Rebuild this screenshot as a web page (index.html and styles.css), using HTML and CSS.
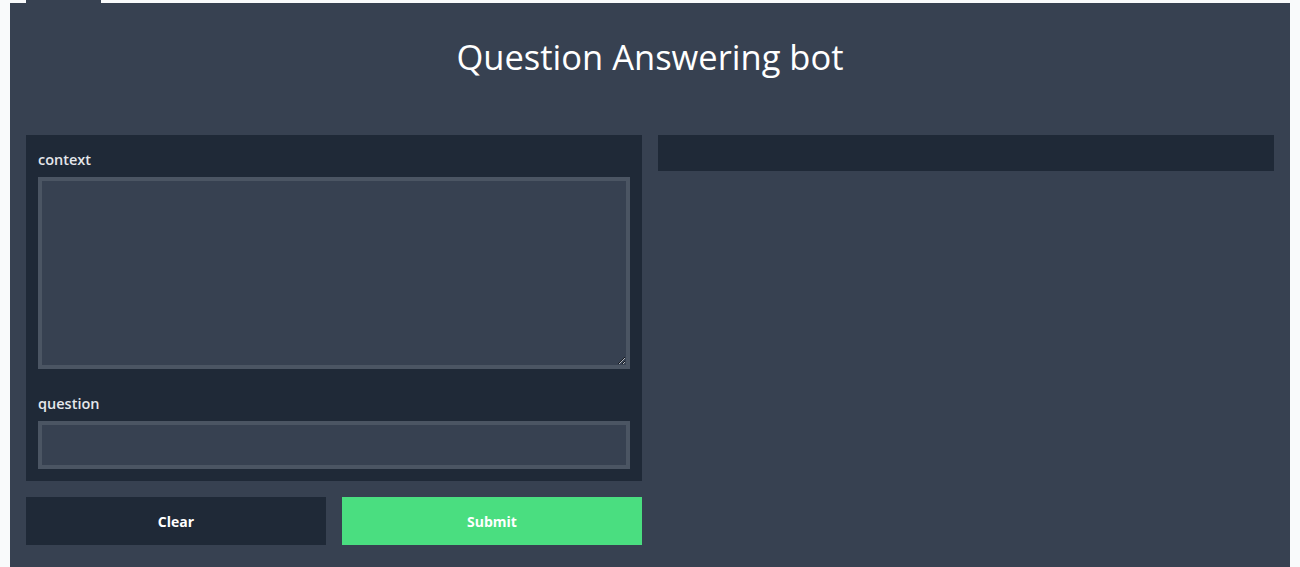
FILE: index.html
```html
<!DOCTYPE html>
<html>
<head>
<meta charset="utf-8">
<link rel="stylesheet" href="styles.css">
</head>
<body>
<div class="tabbar"><div class="tab"></div></div>
<div class="app">
  <h1 class="title">Question Answering bot</h1>
  <div class="columns">
    <div class="col">
      <div class="card">
        <label class="label">context</label>
        <textarea class="textarea"></textarea>
        <label class="label label-q">question</label>
        <input class="input" type="text">
      </div>
      <div class="buttons">
        <button class="btn btn-clear">Clear</button>
        <button class="btn btn-submit">Submit</button>
      </div>
    </div>
    <div class="col">
      <div class="output"></div>
    </div>
  </div>
</div>
</body>
</html>
```
FILE: styles.css
```css
html, body {
  margin: 0;
  padding: 0;
  background: #f9fafb;
  font-family: "Open Sans", "Noto Sans", sans-serif;
  overflow: hidden;
}
.tabbar {
  padding-left: 26px;
  height: 3px;
}
.tab {
  width: 75px;
  height: 3px;
  background: #374151;
}
.app {
  box-sizing: border-box;
  margin: 0 10px;
  background: #374151;
  padding: 0 16px;
  height: calc(100vh - 3px);
}
.title {
  margin: 0;
  padding: 34px 0 58px;
  text-align: center;
  font-size: 34.5px;
  line-height: 40px;
  font-weight: 400;
  color: #ffffff;
}
.columns {
  display: grid;
  grid-template-columns: 1fr 1fr;
  gap: 16px;
  align-items: start;
}
.col {
  display: flex;
  flex-direction: column;
}
.card {
  background: #1f2937;
  padding: 12px;
  display: flex;
  flex-direction: column;
}
.label {
  color: #e5e7eb;
  font-size: 14.5px;
  font-weight: 600;
  line-height: 20px;
  margin-top: 3px;
  margin-bottom: 7px;
}
.label-q {
  margin-top: 25px;
}
.textarea {
  box-sizing: border-box;
  height: 192px;
  width: 100%;
  margin: 0;
  background: #374151;
  border: 4px solid #4b5563;
  resize: vertical;
  color: #fff;
  outline: none;
  display: block;
}
.input {
  box-sizing: border-box;
  height: 48px;
  width: 100%;
  margin: 0;
  background: #374151;
  border: 4px solid #4b5563;
  color: #fff;
  outline: none;
  display: block;
}
.buttons {
  margin-top: 16px;
  display: grid;
  grid-template-columns: 1fr 1fr;
  gap: 16px;
}
.btn {
  height: 48px;
  border: none;
  font-family: "Open Sans", "Noto Sans", sans-serif;
  font-size: 14px;
  font-weight: 700;
  color: #ffffff;
  cursor: pointer;
}
.btn-clear {
  background: #1f2937;
}
.btn-submit {
  background: #4ade80;
}
.output {
  height: 36px;
  background: #1f2937;
}
```
